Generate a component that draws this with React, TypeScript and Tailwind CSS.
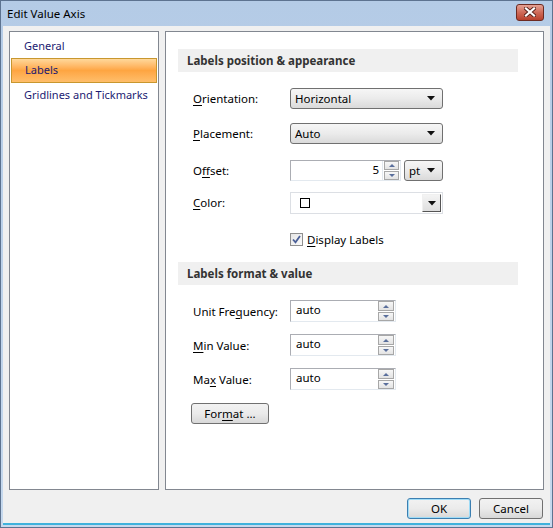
import { ReactNode } from "react";

const font = { fontFamily: '"Segoe UI", "Noto Sans", "Open Sans", sans-serif' };

// Petite flèche noire des listes déroulantes
const Caret = () => (
  <svg width="8" height="5" viewBox="0 0 8 5" className="shrink-0">
    <path d="M0 0h8L4 4.5z" fill="#111" />
  </svg>
);

const U = ({ children }: { children: ReactNode }) => <span className="underline underline-offset-2">{children}</span>;

const Dropdown = ({ value, w = "w-[153px]" }: { value: string; w?: string }) => (
  <div className={`${w} h-[21px] flex items-center justify-between pl-[4px] pr-[7px] rounded-[3px] border border-[#707070] bg-gradient-to-b from-[#f6f6f6] via-[#ebebeb] to-[#dadada] text-[11.5px] text-black`}>
    <span>{value}</span>
    <Caret />
  </div>
);

const SpinArrow = ({ up }: { up: boolean }) => (
  <svg width="6" height="3" viewBox="0 0 6 3">
    <path d={up ? "M0 3h6L3 0z" : "M0 0h6L3 3z"} fill="#5a6f9c" />
  </svg>
);

const SpinButtons = () => (
  <div className="flex flex-col justify-center gap-px px-px h-full border-l border-[#e3e9ef]">
    {[true, false].map((up) => (
      <div key={String(up)} className="w-[15px] h-[9px] flex items-center justify-center border border-[#a7a7a7] bg-gradient-to-b from-[#f7f7f7] to-[#e3e3e3]">
        <SpinArrow up={up} />
      </div>
    ))}
  </div>
);

const SpinInput = ({ value }: { value: string }) => (
  <div className="w-[106px] h-[22px] flex border border-[#abadb3] border-r-[#e3e9ef] border-b-[#e3e9ef] bg-white">
    <span className="flex-1 pl-[5px] leading-[18px] text-[11.5px] text-black">{value}</span>
    <div className="w-[18px] flex flex-col justify-center gap-px items-center bg-white">
      {[true, false].map((up) => (
        <div key={String(up)} className="w-[16px] h-[10px] flex items-center justify-center border border-[#a7a7a7] bg-gradient-to-b from-[#f7f7f7] to-[#e3e3e3]">
          <SpinArrow up={up} />
        </div>
      ))}
    </div>
  </div>
);

const Row = ({ label, children, mt }: { label: ReactNode; children: ReactNode; mt: string }) => (
  <div className={`flex items-center ${mt}`}>
    <div className="w-[112px] shrink-0 pl-[15px] whitespace-nowrap text-[11.5px] text-black">{label}</div>
    {children}
  </div>
);

const SectionHeader = ({ title, mt }: { title: string; mt: string }) => (
  <div className={`w-[340px] h-[23px] bg-[#f0f0f0] flex items-center pl-[9px] text-[11.5px] font-bold text-[#333] ${mt}`}>
    {title}
  </div>
);

const WinButton = ({ children, focused }: { children: ReactNode; focused?: boolean }) => (
  <div
    className={`w-[64px] h-[21px] flex items-center justify-center rounded-[3px] border text-[11.5px] text-black bg-gradient-to-b from-[#f2f2f2] via-[#ebebeb] to-[#d8d8d8] ${
      focused ? "border-[#3c7fb1] shadow-[inset_0_0_0_1px_#9fdcf7]" : "border-[#707070]"
    }`}
  >
    {children}
  </div>
);

export default function App() {
  return (
    <div style={font} className="w-[553px] h-[528px] flex flex-col bg-gradient-to-b from-[#b4cbe6] to-[#c6d9ee] border border-[#5d7390] select-none">
      {/* Barre de titre */}
      <div className="h-[25px] shrink-0 flex items-center justify-between pl-[6px] pr-[8px]">
        <span className="text-[11.5px] text-black">Edit Value Axis</span>
        <div className="w-[28px] h-[17px] mt-[-3px] flex items-center justify-center rounded-[3px] border border-[#6d2a21] bg-gradient-to-b from-[#e4a194] via-[#cf6a58] to-[#b8402c]">
          <svg width="12" height="10" viewBox="0 0 12 10">
            <path d="M2 1.5l8 7M10 1.5l-8 7" stroke="#5a241c" strokeWidth="4" strokeLinecap="square" />
            <path d="M2 1.5l8 7M10 1.5l-8 7" stroke="#fff" strokeWidth="2.2" strokeLinecap="square" />
          </svg>
        </div>
      </div>

      {/* Zone client */}
      <div className="flex-1 flex flex-col mx-[2px] mb-[2px] bg-[#f0f0f0] border-b-2 border-[#3fb2dc] px-[6px] pt-[5px]">
        <div className="flex gap-[6px] h-[459px]">
          {/* Navigation */}
          <div className="w-[150px] bg-white border border-[#828790] pt-[2px] px-px flex flex-col text-[11px] text-[#1b1b72] whitespace-nowrap">
            <div className="h-[24px] flex items-center pl-[13px]">General</div>
            <div className="h-[25px] flex items-center pl-[13px] border border-[#c8972e] bg-gradient-to-b from-[#ffd89a] via-[#fea541] to-[#ffbe6a]">Labels</div>
            <div className="h-[24px] flex items-center pl-[13px]">Gridlines and Tickmarks</div>
          </div>

          {/* Contenu */}
          <div className="w-[379px] bg-white border border-[#828790] pl-[12px] pt-[17px] flex flex-col">
            <SectionHeader title="Labels position & appearance" mt="" />
            <Row label={<><U>O</U>rientation:</>} mt="mt-[16px]">
              <Dropdown value="Horizontal" />
            </Row>
            <Row label={<><U>P</U>lacement:</>} mt="mt-[14px]">
              <Dropdown value="Auto" />
            </Row>
            <Row label={<>O<U>f</U>fset:</>} mt="mt-[16px]">
              <div className="w-[111px] h-[21px] flex border border-[#abadb3] border-r-[#e3e9ef] border-b-[#e3e9ef] bg-white">
                <span className="flex-1 text-right pr-[3px] leading-[18px] text-[11.5px] text-black">5</span>
                <SpinButtons />
              </div>
              <div className="ml-[3px]">
                <Dropdown value="pt" w="w-[39px]" />
              </div>
            </Row>
            <Row label={<><U>C</U>olor:</>} mt="mt-[11px]">
              <div className="w-[153px] h-[22px] flex items-center justify-between border border-[#dcdfe4] bg-white pl-[9px] pr-px">
                <div className="w-[10px] h-[10px] border border-black bg-white" />
                <div className="w-[19px] h-[18px] flex items-center justify-center bg-gradient-to-b from-[#f4f4f4] to-[#dedede] border border-[#f0f0f0] border-r-[#555] border-b-[#555]">
                  <Caret />
                </div>
              </div>
            </Row>
            <div className="flex items-center mt-[17px] pl-[112px] text-[11.5px] text-black">
              <div className="w-[13px] h-[13px] border border-[#8f8f8f] bg-gradient-to-br from-[#e6e6e6] to-[#fafafa] flex items-center justify-center">
                <svg width="9" height="9" viewBox="0 0 9 9">
                  <path d="M1 4.5l2.5 2.8L8 1" stroke="#4a5f97" strokeWidth="1.8" fill="none" />
                </svg>
              </div>
              <span className="ml-[4px]"><U>D</U>isplay Labels</span>
            </div>

            <SectionHeader title="Labels format & value" mt="mt-[14px]" />
            <Row label={<>Unit Fre<U>q</U>uency:</>} mt="mt-[15px]">
              <SpinInput value="auto" />
            </Row>
            <Row label={<><U>M</U>in Value:</>} mt="mt-[12px]">
              <SpinInput value="auto" />
            </Row>
            <Row label={<>Ma<U>x</U> Value:</>} mt="mt-[12px]">
              <SpinInput value="auto" />
            </Row>
            <div className="mt-[13px] ml-[13px] w-[78px] h-[21px] flex items-center justify-center rounded-[3px] border border-[#707070] bg-gradient-to-b from-[#f2f2f2] via-[#ebebeb] to-[#d8d8d8] text-[11.5px] text-black">
              <span>For<U>m</U>at ...</span>
            </div>
          </div>
        </div>

        {/* Boutons */}
        <div className="flex justify-end gap-[8px] mt-[8px] pr-[1px]">
          <WinButton focused>OK</WinButton>
          <WinButton>Cancel</WinButton>
        </div>
      </div>
    </div>
  );
}
